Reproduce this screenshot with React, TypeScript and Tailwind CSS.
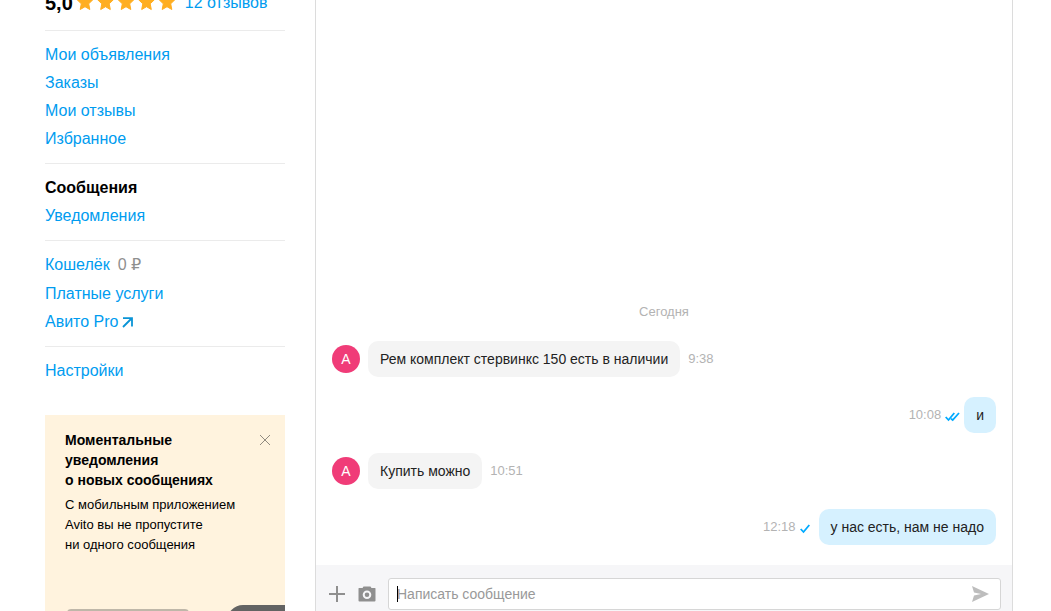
import type { ReactNode } from "react";

interface Message {
  id: number;
  text: string;
  time: string;
  own?: boolean;
  read?: boolean;
}

const messages: Message[] = [
  { id: 1, text: "Рем комплект стервинкс 150 есть в наличии", time: "9:38" },
  { id: 2, text: "и", time: "10:08", own: true, read: true },
  { id: 3, text: "Купить можно", time: "10:51" },
  { id: 4, text: "у нас есть, нам не надо", time: "12:18", own: true },
];

function Stars() {
  return (
    <svg width="100" height="18" viewBox="0 0 100 18" className="shrink-0" fill="#ffae21" stroke="#ffae21" strokeLinejoin="round" role="img" aria-label="5 из 5">
      {[0, 1, 2, 3, 4].map((n) => (
        <path key={n} transform={`translate(${n * 20.5} 0)`} d="M8 1l2.3 5.2 5.4.7-4 3.9 1.1 5.7L8 13.7l-4.8 2.8 1.1-5.7-4-3.9 5.400-.7z" />
      ))}
    </svg>
  );
}

function Ticks({ read }: { read?: boolean }) {
  return (
    <svg width="15" height="14" viewBox="0 0 15 14" fill="none" stroke="#00aaff" strokeWidth="1.8" role="img" aria-label={read ? "Прочитано" : "Отправлено"}>
      <path d="M.7 9l2.8 3L9.300 5" />
      {read && <path d="M6 10.700L7.700 12 14 5" />}
    </svg>
  );
}

function NavGroup({ children }: { children: ReactNode }) {
  return <ul className="border-t border-[#ebebeb] py-2.5">{children}</ul>;
}

function NavLink({ children }: { children: ReactNode }) {
  return (
    <a href="#" className="text-[#009cf0] hover:text-[#ff6163]">
      {children}
    </a>
  );
}

function Promo() {
  return (
    <section className="mt-5 bg-[#fff3de] px-5 pt-[15px]">
      <div className="flex justify-between">
        <h2 className="text-sm leading-5 font-bold">
          Моментальные
          <br />
          уведомления
          <br />о новых сообщениях
        </h2>
        <button type="button" aria-label="Закрыть" className="-mr-2.5 flex size-5 items-center justify-center">
          <svg width="12" height="12" viewBox="0 0 12 12" stroke="#918b80" strokeWidth="1">
            <path d="M1 1l10 10M11 1L1 11" />
          </svg>
        </button>
      </div>
      <p className="mt-[5px] text-[13px] leading-5">
        С мобильным приложением
        <br />
        Avito вы не пропустите
        <br />
        ни одного сообщения
      </p>
      {/* телефон и уведомление */}
      <div className="-mr-5 mt-[50px] flex items-start justify-between">
        <div className="mt-1 ml-0.5 h-20 w-[122px] rounded-sm border-t-2 border-[#bfb7a9] bg-white" />
        <div className="h-24 w-[58px] rounded-tl-2xl bg-[#636363]" />
      </div>
    </section>
  );
}

function Sidebar() {
  return (
    <aside className="w-60 shrink-0 text-base leading-7">
      <div className="-mt-[11px] flex h-[41px] items-start">
        <span className="text-xl leading-7 font-bold">5,0</span>
        <span className="mt-1 ml-1">
          <Stars />
        </span>
        <a href="#" className="ml-2 text-[#009cf0]">
          12 отзывов
        </a>
      </div>

      <nav>
        <NavGroup>
          <li><NavLink>Мои объявления</NavLink></li>
          <li><NavLink>Заказы</NavLink></li>
          <li><NavLink>Мои отзывы</NavLink></li>
          <li><NavLink>Избранное</NavLink></li>
        </NavGroup>
        <NavGroup>
          <li className="font-bold">Сообщения</li>
          <li><NavLink>Уведомления</NavLink></li>
        </NavGroup>
        <NavGroup>
          <li className="flex pb-px">
            <NavLink>Кошелёк</NavLink>
            <span className="ml-2 text-[#8f8f8f]">
              0 <span className="font-['DejaVu_Sans',sans-serif] leading-none">₽</span>
            </span>
          </li>
          <li><NavLink>Платные услуги</NavLink></li>
          <li>
            <a href="#" className="flex items-center gap-[3px] text-[#009cf0]">
              Авито Pro
              <svg width="11" height="11" viewBox="0 0 11 11" fill="none" stroke="#0a94d6" strokeWidth="1.8">
                <path d="M1 10l8.500-8.500M1 1.200h9V9.500" />
              </svg>
            </a>
          </li>
        </NavGroup>
        <NavGroup>
          <li><NavLink>Настройки</NavLink></li>
        </NavGroup>
      </nav>

      <Promo />
    </aside>
  );
}

function MessageRow({ message }: { message: Message }) {
  const { text, time, own, read } = message;

  if (own) {
    return (
      <li className="flex items-center justify-end">
        <time className="text-[13px] text-[#b3b3b3]">{time}</time>
        <span className="mx-1">
          <Ticks read={read} />
        </span>
        <p className="rounded-[10px] bg-[#d6f1ff] px-3 py-2 text-sm leading-5 text-[#222]">{text}</p>
      </li>
    );
  }

  return (
    <li className="flex items-center gap-2">
      <span className="flex size-7 items-center justify-center rounded-full bg-[#f03c78] text-sm text-white">А</span>
      <p className="rounded-[10px] bg-[#f4f4f4] px-3 py-2 text-sm leading-5 text-[#222]">{text}</p>
      <time className="text-[13px] text-[#b3b3b3]">{time}</time>
    </li>
  );
}

function Composer() {
  return (
    <form className="flex shrink-0 items-center bg-[#f6f6f8] pt-[13px] pr-[11px] pb-px pl-3" onSubmit={(e) => e.preventDefault()}>
      <button type="button" aria-label="Добавить" className="flex w-[18px] justify-center">
        <svg width="16" height="16" viewBox="0 0 16 16" stroke="#8f8f8f" strokeWidth="2">
          <path d="M8 0v16M0 8h16" />
        </svg>
      </button>
      <button type="button" aria-label="Фото" className="ml-3">
        <svg width="18" height="16" viewBox="0 0 18 16">
          <path fill="#8f8f8f" fillRule="evenodd" d="M4.500 2L5.500.5h7l1 1.500H17a.5.5 0 0 1 .5.5v12a1 1 0 0 1-1 1h-15a1 1 0 0 1-1-1v-12A.5.5 0 0 1 1 2zM9 4.500a4.300 4.300 0 1 0 0 8.600 4.300 4.300 0 0 0 0-8.600zM9 6.500a2.300 2.300 0 1 1 0 4.600 2.300 2.300 0 0 1 0-4.600z" />
        </svg>
      </button>
      <div className="relative ml-3 flex h-8 flex-1 items-center rounded-[3px] border border-[#d6d6d6] bg-white pr-[11px] pl-2">
        <span className="absolute left-2 h-4 w-px bg-black" />
        <input
          type="text"
          aria-label="Написать сообщение"
          placeholder="Написать сообщение"
          className="min-w-0 flex-1 text-sm leading-5 outline-none placeholder:text-[#999]"
        />
        <button type="submit" aria-label="Отправить">
          <svg width="17" height="16" viewBox="0 0 17 16" fill="#bdbdbd">
            <path d="M0 0l17 8-17 8 2-6.500L9 8 2 6.500z" />
          </svg>
        </button>
      </div>
    </form>
  );
}

export default function App() {
  return (
    <div className="flex h-screen overflow-hidden bg-white pr-[38px] pl-[45px] font-['Liberation_Sans',Arial,sans-serif] text-black">
      <Sidebar />
      <main className="ml-[30px] flex min-w-0 flex-1 flex-col border-x border-[#dcdcdc]">
        <div className="flex flex-1 flex-col justify-end gap-[19px] px-4 pb-5">
          <div className="text-center text-[13px] leading-5 text-[#b3b3b3]">Сегодня</div>
          <ul className="flex flex-col gap-5">
            {messages.map((m) => (
              <MessageRow key={m.id} message={m} />
            ))}
          </ul>
        </div>
        <Composer />
      </main>
    </div>
  );
}
